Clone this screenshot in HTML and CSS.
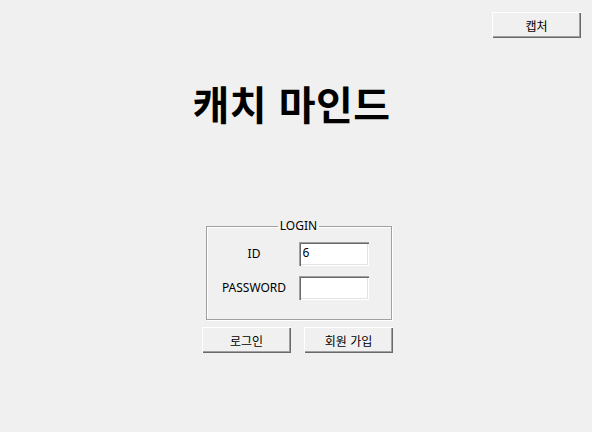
FILE: index.html
```html
<!DOCTYPE html>
<html lang="ko">
<head>
<meta charset="utf-8">
<title>캐치 마인드</title>
<link rel="stylesheet" href="styles.css">
</head>
<body>
<div class="top-row">
  <button class="btn" type="button">캡처</button>
</div>
<h1 class="title">캐치 마인드</h1>
<div class="login-area">
  <fieldset class="group">
    <legend class="group-title">LOGIN</legend>
    <div class="form-grid">
      <label class="label" for="id">ID</label>
      <input class="field" id="id" type="text" value="6">
      <label class="label" for="pw">PASSWORD</label>
      <input class="field" id="pw" type="password" value="">
    </div>
  </fieldset>
  <div class="btn-row">
    <button class="btn" type="button">로그인</button>
    <button class="btn" type="button">회원 가입</button>
  </div>
</div>
</body>
</html>
```
FILE: styles.css
```css
html, body {
  margin: 0;
  padding: 0;
}
body {
  width: 592px;
  height: 432px;
  background: #f0f0f0;
  font-family: "Noto Sans", "Noto Sans CJK KR", sans-serif;
  font-size: 12px;
  color: #000;
  overflow: hidden;
}
.top-row {
  display: flex;
  justify-content: flex-end;
  padding: 12px 11px 0 0;
}
.btn {
  width: 89px;
  height: 26px;
  box-sizing: border-box;
  margin: 0;
  padding: 0;
  border: none;
  background: #f0f0f0;
  font-family: "Noto Sans CJK KR", sans-serif;
  font-size: 12px;
  color: #000;
  box-shadow: inset 1px 1px 0 #ffffff, inset -1px -1px 0 #696969, inset -2px -2px 0 #a0a0a0;
}
.title {
  margin: 39px 0 0;
  padding-right: 9px;
  text-align: center;
  font-family: "Noto Sans CJK KR", sans-serif;
  font-size: 40px;
  font-weight: 700;
  line-height: 52px;
  letter-spacing: 0.5px;
}
.login-area {
  display: flex;
  flex-direction: column;
  align-items: center;
  margin-top: 90px;
  padding-left: 5px;
}
.group {
  width: 186px;
  box-sizing: border-box;
  margin: 0;
  padding: 9px 0 19px;
  border: 1px solid #a0a0a0;
  box-shadow: inset 1px 1px 0 #ffffff, 1px 1px 0 #ffffff;
}
.group-title {
  margin: 0 auto;
  padding: 0 2px;
  line-height: 14px;
  font-size: 12px;
}
.form-grid {
  display: grid;
  grid-template-columns: 79px 70px;
  grid-auto-rows: 24px;
  column-gap: 5px;
  row-gap: 10px;
  padding-left: 8px;
  align-items: center;
}
.label {
  text-align: center;
  line-height: 24px;
}
.field {
  width: 70px;
  height: 24px;
  box-sizing: border-box;
  margin: 0;
  padding: 0 4px 4px;
  border: none;
  background: #fff;
  font-family: "Noto Sans", sans-serif;
  font-size: 12px;
  color: #000;
  box-shadow: inset 1px 1px 0 #a0a0a0, inset 2px 2px 0 #696969, inset -1px -1px 0 #ffffff, inset -2px -2px 0 #e3e3e3;
  outline: none;
  vertical-align: top;
}
.btn-row {
  display: flex;
  gap: 13px;
  margin-top: 7px;
  margin-left: -2px;
}
```
